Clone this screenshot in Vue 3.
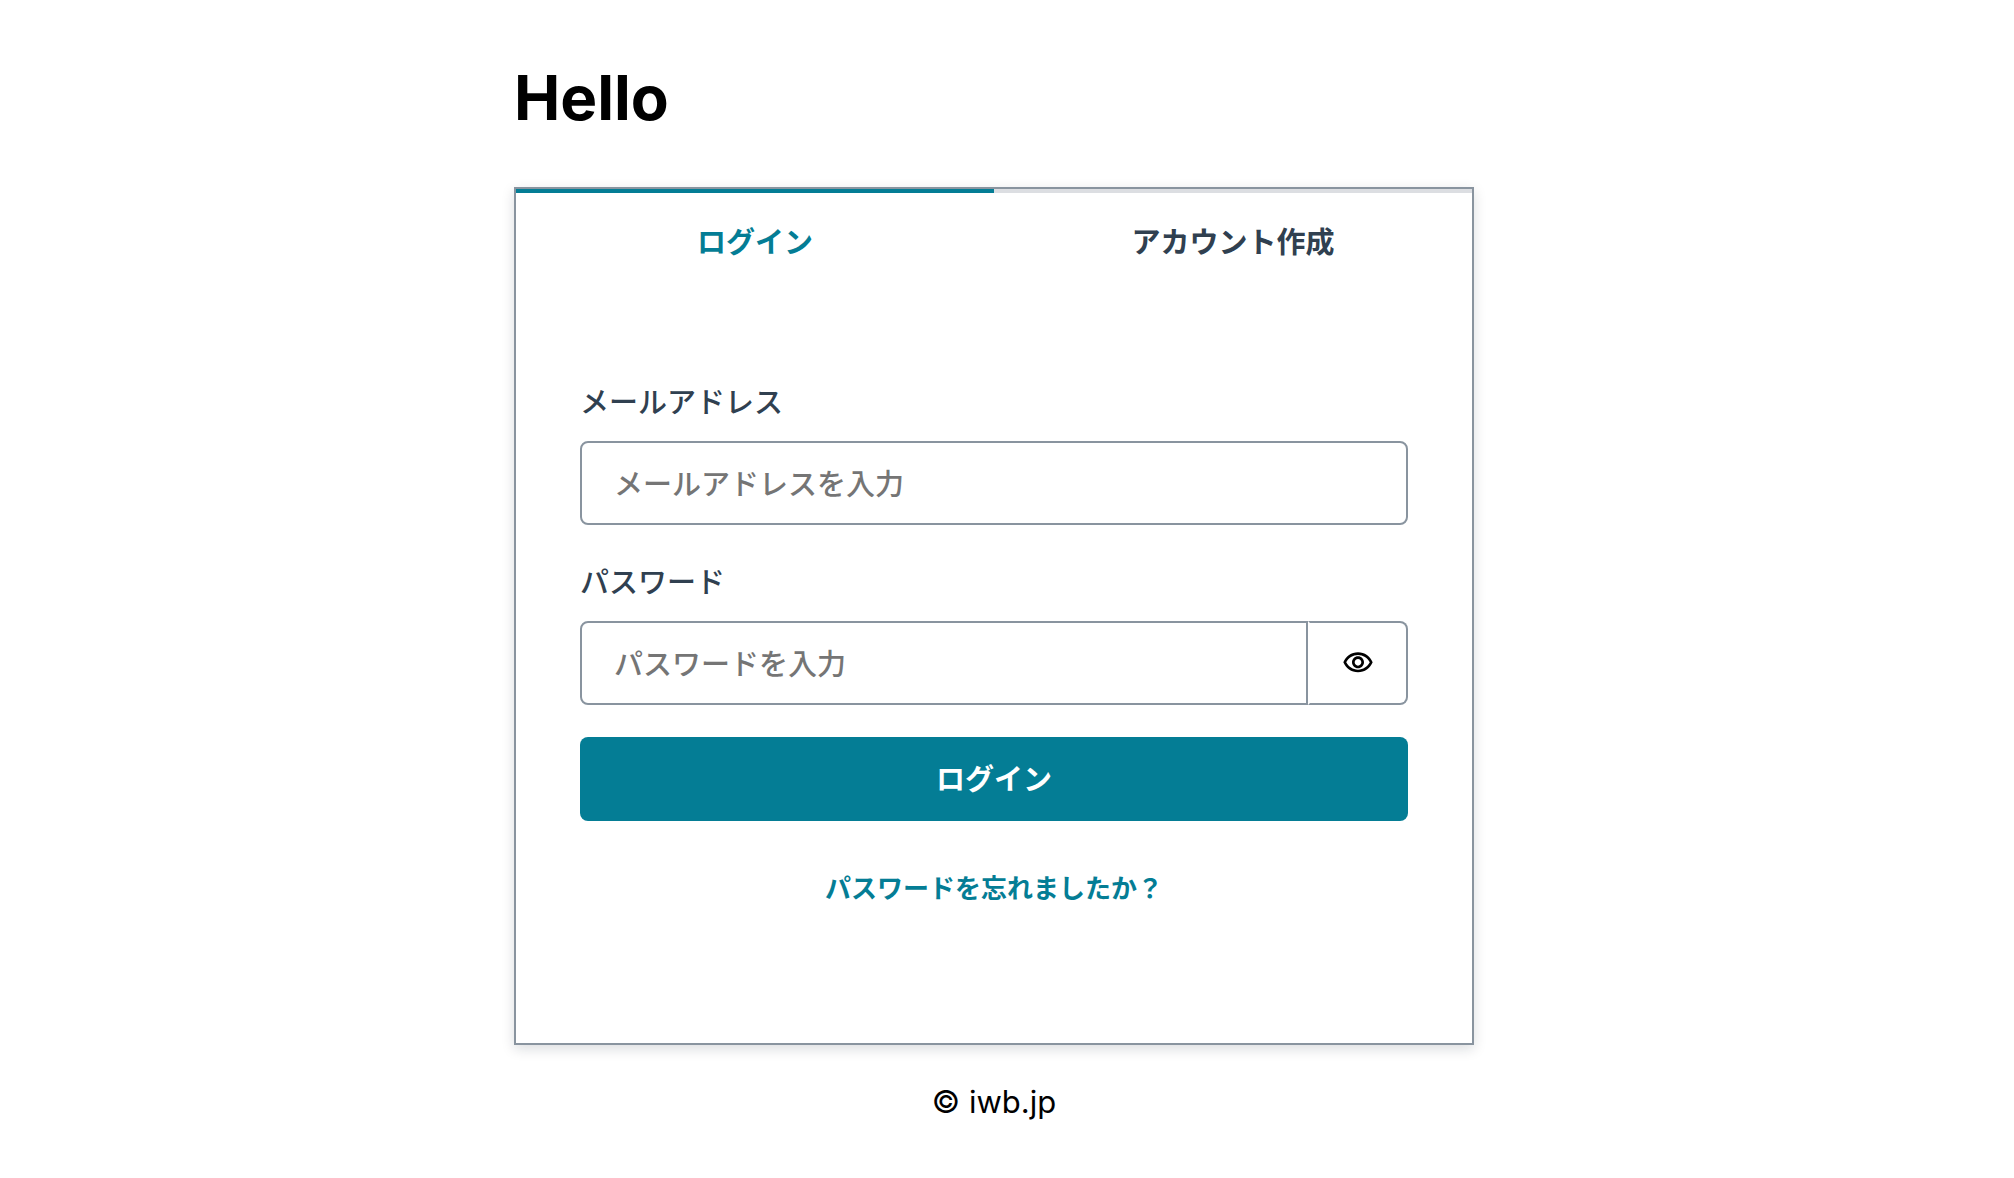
<script setup>
import { ref } from 'vue'

const tabs = [
  { id: 'signIn', label: 'ログイン' },
  { id: 'signUp', label: 'アカウント作成' },
]
const active = ref('signIn')
const email = ref('')
const password = ref('')
const visible = ref(false)
</script>

<template>
  <main class="page">
    <div class="column">
      <h1 class="title">Hello</h1>
      <section class="card">
        <div class="tabs" role="tablist">
          <button
            v-for="tab in tabs"
            :key="tab.id"
            type="button"
            role="tab"
            class="tab"
            :class="{ active: active === tab.id }"
            :aria-selected="active === tab.id"
            @click="active = tab.id"
          >{{ tab.label }}</button>
        </div>
        <form class="form" @submit.prevent>
          <div class="field">
            <label for="email">メールアドレス</label>
            <input id="email" v-model="email" class="input" type="email" placeholder="メールアドレスを入力">
          </div>
          <div class="field">
            <label for="password">パスワード</label>
            <div class="group">
              <input
                id="password"
                v-model="password"
                class="input joined"
                :type="visible ? 'text' : 'password'"
                placeholder="パスワードを入力"
              >
              <button type="button" class="reveal" aria-label="パスワードを表示" @click="visible = !visible">
                <svg viewBox="0 0 24 24" aria-hidden="true">
                  <path d="M12 6C15.79 6 19.17 8.13 20.82 11.5C19.17 14.87 15.79 17 12 17C8.21 17 4.83 14.87 3.18 11.5C4.83 8.13 8.21 6 12 6ZM12 4C7 4 2.73 7.11 1 11.5C2.73 15.89 7 19 12 19C17 19 21.27 15.89 23 11.5C21.27 7.11 17 4 12 4ZM12 9C13.38 9 14.5 10.12 14.5 11.5C14.5 12.88 13.38 14 12 14C10.62 14 9.5 12.88 9.5 11.5C9.5 10.12 10.62 9 12 9ZM12 7C9.52 7 7.5 9.02 7.5 11.5C7.5 13.98 9.52 16 12 16C14.48 16 16.5 13.98 16.5 11.5C16.5 9.02 14.48 7 12 7Z" />
                </svg>
              </button>
            </div>
          </div>
          <button type="submit" class="submit">ログイン</button>
        </form>
        <div class="footer">
          <button type="button" class="forgot">パスワードを忘れましたか？</button>
        </div>
      </section>
      <footer class="copyright">© iwb.jp</footer>
    </div>
  </main>
</template>

<style>
body {
  margin: 0;
  background: #fff;
}
</style>

<style scoped>
* {
  box-sizing: border-box;
}

.page {
  display: flex;
  justify-content: center;
  padding: 58px 26px 52px 0;
  color: #000;
  font-family: Inter, "Noto Sans CJK JP", sans-serif;
  font-size: 29px;
  line-height: 48px;
}

.column {
  width: 100%;
  max-width: 960px;
}

.title {
  margin: 0 0 49px;
  font-size: 62px;
  font-weight: 700;
  line-height: 80px;
}

.card {
  border: 2px solid #89949f;
  background: #fff;
  box-shadow: 0 4px 12px rgba(13, 26, 38, 0.15);
}

button,
input {
  margin: 0;
  font: inherit;
}

button {
  cursor: pointer;
}

.tabs {
  display: flex;
}

.tab {
  flex: 1;
  padding: 26px 32px 22px;
  border: 0;
  border-top: 4px solid #dcdee2;
  background: transparent;
  color: #304050;
  font-weight: 700;
}

.tab.active {
  border-color: #047d95;
  color: #047d95;
}

.form {
  display: flex;
  flex-direction: column;
  gap: 32px;
  padding: 88px 64px 32px;
}

.field {
  display: flex;
  flex-direction: column;
  gap: 12px;
  color: #304050;
  font-weight: 500;
  line-height: 52px;
}

.input {
  width: 100%;
  height: 84px;
  padding: 2px 32px 0;
  border: 2px solid #89949f;
  border-radius: 8px;
  background: transparent;
  color: #304050;
}

.input::placeholder {
  color: #757575;
  opacity: 1;
}

.group {
  display: flex;
}

.joined {
  flex: 1;
  min-width: 0;
  border-radius: 8px 0 0 8px;
}

.reveal {
  display: flex;
  align-items: center;
  justify-content: center;
  width: 100px;
  padding: 0;
  border: 2px solid #89949f;
  border-left-color: transparent;
  border-radius: 0 8px 8px 0;
  background: transparent;
}

.reveal svg {
  width: 32px;
  height: 32px;
}

.submit {
  height: 84px;
  padding: 2px 32px 0;
  border: 0;
  border-radius: 8px;
  background: #047d95;
  color: #fff;
  font-weight: 700;
}

.footer {
  padding: 0 64px 118px;
}

.forgot {
  display: block;
  width: 100%;
  padding: 12px 24px;
  border: 0;
  background: transparent;
  color: #047d95;
  font-size: 26px;
  font-weight: 700;
}

.copyright {
  padding-top: 33px;
  font-size: 31px;
  text-align: center;
}
</style>
